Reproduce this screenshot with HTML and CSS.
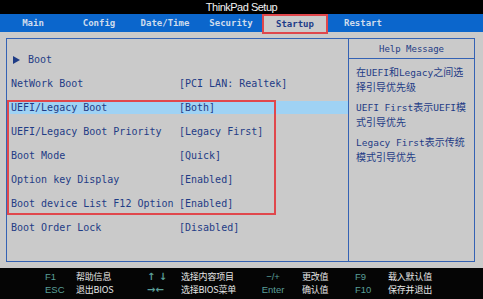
FILE: index.html
```html
<!DOCTYPE html>
<html lang="zh-CN">
<head>
    <meta charset="UTF-8">
    <title>ThinkPad Setup</title>
    <link rel="stylesheet" href="styles.css">
</head>
<body>
    <div class="titlebar">ThinkPad Setup</div>
    <nav class="tabs">
        <span class="tab">Main</span>
        <span class="tab">Config</span>
        <span class="tab">Date/Time</span>
        <span class="tab">Security</span>
        <span class="tab active">Startup</span>
        <span class="tab">Restart</span>
    </nav>
    <main class="screen">
        <div class="panel">
            <div class="options">
                <div class="row submenu"><span class="arrow"></span>Boot</div>
                <div class="row"><span>NetWork Boot</span><span>[PCI LAN: Realtek]</span></div>
                <div class="group">
                    <div class="row selected"><span>UEFI/Legacy Boot</span><span>[Both]</span></div>
                    <div class="row"><span>UEFI/Legacy Boot Priority</span><span>[Legacy First]</span></div>
                    <div class="row"><span>Boot Mode</span><span>[Quick]</span></div>
                    <div class="row"><span>Option key Display</span><span>[Enabled]</span></div>
                    <div class="row"><span>Boot device List F12 Option</span><span>[Enabled]</span></div>
                </div>
                <div class="row"><span>Boot Order Lock</span><span>[Disabled]</span></div>
            </div>
            <aside class="help">
                <h2>Help Message</h2>
                <p>在<span class="en">UEFI</span>和<span class="en">Legacy</span>之间选<br>择引导优先级</p>
                <p><span class="en">UEFI First</span>表示<span class="en">UEFI</span>模<br>式引导优先</p>
                <p><span class="en">Legacy First</span>表示传统<br>模式引导优先</p>
            </aside>
        </div>
    </main>
    <footer class="keys">
        <span class="key">F1</span><span class="desc">帮助信息</span>
        <span class="key sym">↑ ↓</span><span class="desc">选择内容项目</span>
        <span class="key mid">−/+</span><span class="desc far">更改值</span>
        <span class="key">F9</span><span class="desc">载入默认值</span>
        <span class="key">ESC</span><span class="desc">退出BIOS</span>
        <span class="key sym">→←</span><span class="desc">选择BIOS菜单</span>
        <span class="key mid">Enter</span><span class="desc far">确认值</span>
        <span class="key">F10</span><span class="desc">保存并退出</span>
    </footer>
</body>
</html>
```

FILE: styles.css
```css
body {
    margin: 0;
    width: 483px;
    height: 299px;
    overflow: hidden;
    background: #050505;
    font-family: "DejaVu Sans Mono", monospace;
}
.titlebar {
    height: 14px;
    line-height: 14px;
    background: #000;
    color: #f2f2f2;
    text-align: center;
    font-family: "Liberation Sans", Arial, sans-serif;
    font-size: 11px;
    letter-spacing: -0.5px;
}
.tabs {
    display: flex;
    height: 18px;
    background: #0b66cc;
}
.tab {
    flex: 0 0 66px;
    height: 18px;
    line-height: 18px;
    text-align: center;
    font-size: 9px;
    font-weight: bold;
    color: #cfdcec;
}
.tab.active {
    box-sizing: border-box;
    height: 20px;
    line-height: 16px;
    margin-left: -2px;
    margin-right: 2px;
    background: #cbcbcb;
    border: 2px solid #e0474c;
    color: #1d3c88;
}
.screen {
    height: 236px;
    box-sizing: border-box;
    padding: 6px 8px 6px 6px;
    background: #cacaca;
}
.panel {
    display: flex;
    height: 224px;
    box-sizing: border-box;
    border: 1px solid #3462b4;
}
.options {
    width: 341px;
    border-right: 1px solid #3462b4;
    padding-top: 14px;
    display: flex;
    flex-direction: column;
    gap: 11px;
}
.row {
    display: grid;
    grid-template-columns: 168px 1fr;
    height: 13px;
    line-height: 13px;
    padding-left: 4px;
    font-size: 10px;
    color: #1f3c86;
    white-space: nowrap;
}
.row.submenu {
    display: flex;
    align-items: center;
}
.arrow {
    width: 0;
    height: 0;
    margin: 0 8px 0 2px;
    border-left: 7px solid #1f3c86;
    border-top: 4px solid transparent;
    border-bottom: 4px solid transparent;
}
.row.selected {
    background: #9fd2f4;
}
.group {
    position: relative;
    display: flex;
    flex-direction: column;
    gap: 11px;
}
.group::after {
    content: "";
    position: absolute;
    left: 0;
    top: -1px;
    width: 269px;
    bottom: -5px;
    box-sizing: border-box;
    border: 2px solid #e0474c;
}
.help {
    flex: 1;
    color: #1f3c86;
}
.help h2 {
    margin: 0;
    height: 19px;
    line-height: 21px;
    border-bottom: 1px solid #3462b4;
    text-align: center;
    font-size: 9px;
    font-weight: normal;
}
.help p {
    margin: 6px 0 3px;
    padding-left: 7px;
    font-family: "Noto Sans CJK SC", sans-serif;
    font-size: 10px;
    line-height: 14.5px;
}
.help .en {
    font-family: "DejaVu Sans Mono", monospace;
    font-size: 9.5px;
    line-height: 1;
}
.keys {
    display: grid;
    grid-template-columns: 31px 71px 34px 74px 36px 64px 33px 1fr;
    grid-auto-rows: 13px;
    padding: 2px 0 0 45px;
    line-height: 13px;
}
.key {
    color: #5a9f98;
    font-family: "Liberation Sans", "DejaVu Sans", sans-serif;
    font-size: 9.5px;
}
.key.sym {
    font-family: "DejaVu Sans", sans-serif;
    font-size: 10px;
    font-weight: bold;
}
.key.mid {
    text-align: center;
}
.desc {
    color: #e6e6e6;
    font-family: "Noto Sans CJK SC", sans-serif;
    font-size: 9px;
    letter-spacing: -0.2px;
}
.desc.far {
    padding-left: 11px;
}
```
